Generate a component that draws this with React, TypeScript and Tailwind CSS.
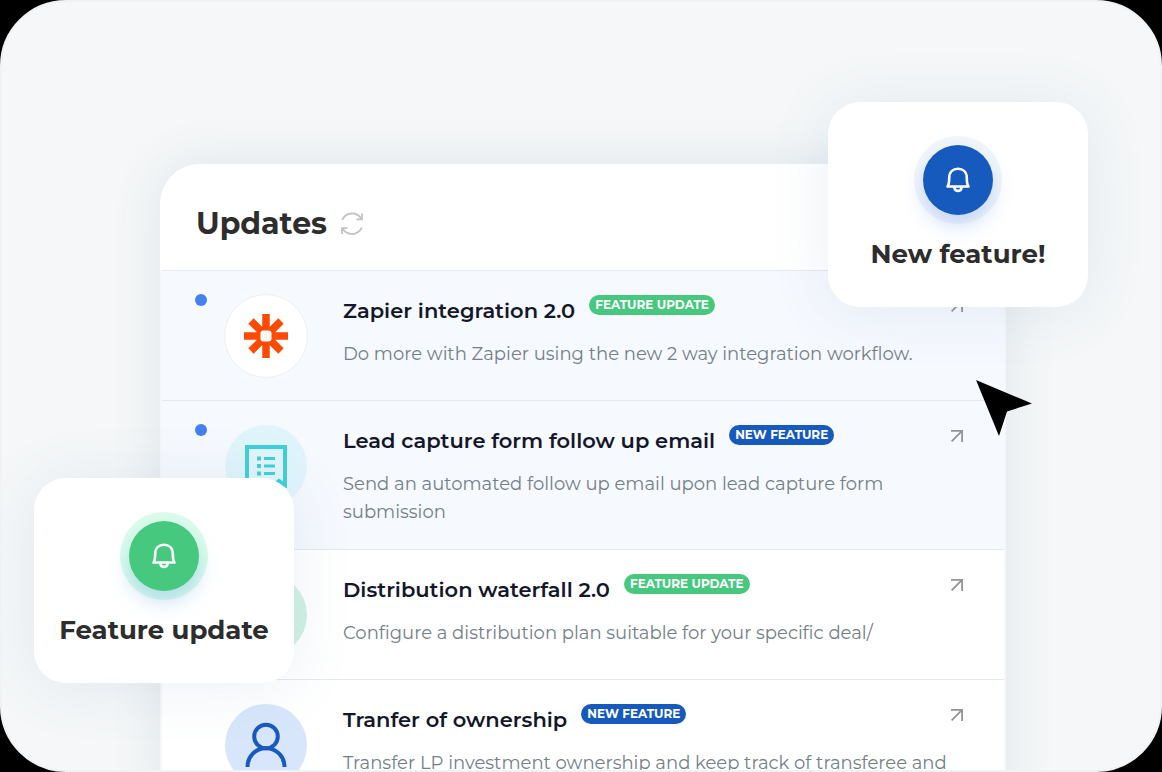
import clsx from "clsx";
import type { ReactNode } from "react";

// ── Icons ───────────────────────────────────────────────────────────────
function RefreshIcon() {
  return (
    <svg className="h-6 w-6" viewBox="0 0 24 24" fill="none" stroke="#c3c3c3" strokeWidth="1.8">
      <path d="M1.200 7.800C3.300 3.500 6.800 1.500 11 1.500c4.200 0 7.300 2 9.600 5.400M21 1.500v5.800h-5.500" />
      <path d="M20.800 15.700c-2.100 4.300-5.600 6.300-9.800 6.300-4.200 0-7.300-2-9.600-5.400M1 22v-5.800h5.500" />
    </svg>
  );
}

function BellIcon() {
  return (
    <svg className="h-7 w-7" viewBox="0 0 28 28" fill="none" stroke="#fff" strokeWidth="2.600" strokeLinejoin="round" strokeLinecap="round">
      <path d="M3.500 20.500c1.700-2.300 1.700-5 1.700-8.500C5.200 6 9 2.700 14 2.700S22.800 6 22.800 12c0 3.500 0 6.200 1.700 8.500z" />
      <path d="M10.300 21c.3 2.500 1.700 4 3.700 4s3.400-1.500 3.700-4" />
    </svg>
  );
}

function ZapierIcon() {
  return (
    <svg className="h-11 w-11" viewBox="0 0 44 44" stroke="#ff4a00" strokeWidth="7.500">
      <path d="M22 0v17M22 27v17M0 22h17M27 22h17M7 7l11 11M26 26l11 11M37 7L26 18M18 26L7 37" />
      <rect x="16.500" y="16.500" width="11" height="11" rx="3" fill="#fff" stroke="none" />
    </svg>
  );
}

function FormIcon() {
  return (
    <svg className="h-11 w-11" viewBox="0 0 44 44" fill="none" stroke="#3fcfdc" strokeWidth="4">
      <path d="M3 42V3h38v38l-6-4-6 5-7-5-7 5-6-5z" />
      <path d="M20 14.500h11M20 22h11M20 29.500h11" strokeWidth="3.200" />
      <path d="M13 14.500h4M13 22h4M13 29.500h4" />
    </svg>
  );
}

function PersonIcon() {
  return (
    <svg className="h-12 w-12" viewBox="0 0 48 48" fill="none" stroke="#1a5abf" strokeWidth="4">
      <circle cx="24" cy="15.500" r="11.800" />
      <path d="M5.500 46c0-10.500 8-18.700 18.500-18.700S42.500 35.500 42.500 46" />
    </svg>
  );
}

function ArrowIcon() {
  return (
    <svg className="h-3 w-3" viewBox="0 0 12 12" fill="none" stroke="#929497" strokeWidth="1.800">
      <path d="M0 .9h11.100V12M10.800 1.200L.6 11.400" />
    </svg>
  );
}

// ── Badge ───────────────────────────────────────────────────────────────
type Kind = "update" | "new";

function Badge({ kind }: { kind: Kind }) {
  return (
    <span
      className={clsx("mt-px h-5 rounded-full px-1.5 text-[12px] leading-5 font-bold whitespace-nowrap text-white", {
        "bg-[#46c97e]": kind === "update",
        "bg-[#175abd]": kind === "new",
      })}
    >
      {kind === "update" ? "FEATURE UPDATE" : "NEW FEATURE"}
    </span>
  );
}

// ── Update row ──────────────────────────────────────────────────────────
interface Update {
  title: string;
  text: string;
  kind: Kind;
  unread?: boolean;
  avatar: string;
  icon?: ReactNode;
}

const updates: Update[] = [
  {
    title: "Zapier integration 2.0",
    text: "Do more with Zapier using the new 2 way integration workflow.",
    kind: "update",
    unread: true,
    avatar: "border-[#eef0f2] bg-white",
    icon: <ZapierIcon />,
  },
  {
    title: "Lead capture form follow up email",
    text: "Send an automated follow up email upon lead capture form submission",
    kind: "new",
    unread: true,
    avatar: "border-transparent bg-[#e0f4fb]",
    icon: <FormIcon />,
  },
  {
    title: "Distribution waterfall 2.0",
    text: "Configure a distribution plan suitable for your specific deal/",
    kind: "update",
    avatar: "border-transparent bg-[#d0f2e3]",
  },
  {
    title: "Tranfer of ownership",
    text: "Transfer LP investment ownership and keep track of transferee and",
    kind: "new",
    avatar: "border-transparent bg-[#d8e6fb]",
    icon: <PersonIcon />,
  },
];

function UpdateRow({ title, text, kind, unread, avatar, icon }: Update) {
  return (
    <li
      className={clsx(
        "flex items-start border-b border-[#e5e9ed] pt-[23px] pr-[41px] pb-[22px] pl-[33px]",
        unread ? "bg-[#f6f9fe]" : "bg-white"
      )}
    >
      <span className={clsx("h-3 w-3 shrink-0 rounded-full", unread && "bg-[#4380f0]")} />
      <span className={clsx("ml-[17px] flex h-[84px] w-[84px] shrink-0 items-center justify-center rounded-full border bg-clip-padding", avatar)}>
        {icon}
      </span>
      <div className="ml-[35px] min-w-0 flex-1 pb-px">
        <div className="flex items-start gap-3.5">
          <h2 className="text-[21px] leading-[34px] font-semibold whitespace-nowrap text-[#14172a]">{title}</h2>
          <Badge kind={kind} />
        </div>
        <p className="mt-3 text-[18px] leading-7 text-[#748087]">{text}</p>
      </div>
      <a href="#" aria-label={`Open ${title}`} className="mt-1.5 shrink-0">
        <ArrowIcon />
      </a>
    </li>
  );
}

// ── Floating card ───────────────────────────────────────────────────────
function NoticeCard({ kind, label, className }: { kind: Kind; label: string; className: string }) {
  return (
    <div
      className={clsx(
        "absolute flex w-[260px] flex-col items-center rounded-[32px] bg-white pt-[34px] pb-[37px] shadow-[0_4px_60px_rgba(90,130,180,0.12)]",
        className
      )}
    >
      <div
        className={clsx("flex h-[88px] w-[88px] items-center justify-center rounded-full", {
          "bg-[#dcfcea]": kind === "update",
          "bg-[#f2f6fa]": kind === "new",
        })}
      >
        <div
          className={clsx("flex h-[70px] w-[70px] items-center justify-center rounded-full", {
            "bg-[#46c97e] shadow-[0_10px_20px_rgba(90,160,230,0.35)]": kind === "update",
            "bg-[#175abd] shadow-[0_10px_20px_rgba(90,140,240,0.3)]": kind === "new",
          })}
        >
          <BellIcon />
        </div>
      </div>
      <p className="mt-3.5 text-[26px] leading-8 font-bold whitespace-nowrap text-[#2d2d2e]">{label}</p>
    </div>
  );
}

export default function App() {
  return (
    <div className="bg-black font-[Montserrat,Inter,sans-serif]">
      <main className="relative h-screen overflow-hidden rounded-[66px] border-2 border-[#f1f2f4] bg-[#f5f7f8]">
        <section className="mt-[162px] mr-[154px] ml-[158px] rounded-t-[40px] shadow-[0_0_50px_rgba(90,130,150,0.14)]">
          <header className="flex h-[106px] items-center gap-3.5 rounded-t-[40px] bg-white pt-3.5 pl-9">
            <h1 className="text-[30px] leading-10 font-bold text-[#2d2d2e]">Updates</h1>
            <button type="button" aria-label="Refresh" className="cursor-pointer">
              <RefreshIcon />
            </button>
          </header>
          <ul className="mx-0.5 border-t border-[#e5e9ed]">
            {updates.map((update) => (
              <UpdateRow key={update.title} {...update} />
            ))}
          </ul>
        </section>

        <NoticeCard kind="new" label="New feature!" className="top-[100px] right-[72px]" />
        <NoticeCard kind="update" label="Feature update" className="top-[476px] left-8" />

        <svg className="absolute top-[378px] right-32 h-14 w-14" viewBox="0 0 56 56" fill="#000">
          <path d="M0 0l56 23.500L31 31.500 23 56z" />
        </svg>
      </main>
    </div>
  );
}
